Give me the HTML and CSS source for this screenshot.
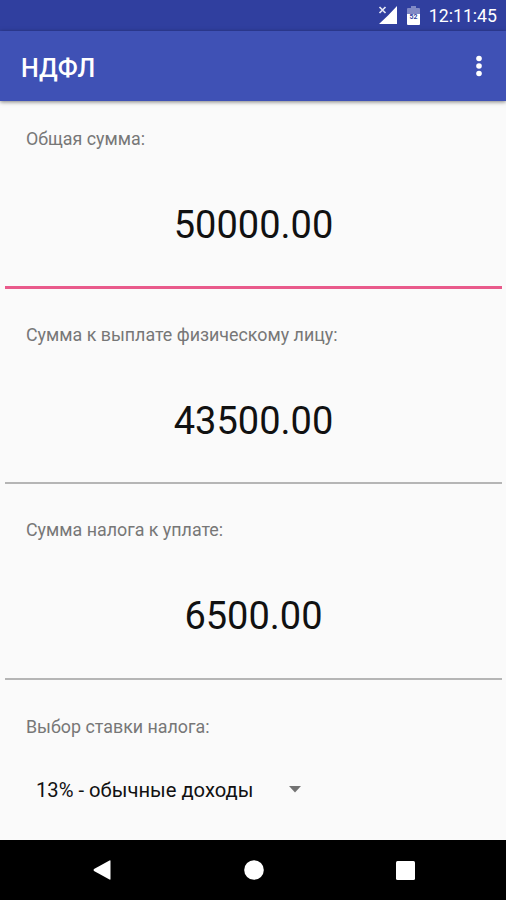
FILE: index.html
```html
<!DOCTYPE html>
<html lang="ru">
<head>
<meta charset="utf-8">
<title>НДФЛ</title>
<link rel="stylesheet" href="styles.css">
</head>
<body>
<div class="status">
  <svg class="signal" width="20" height="19" viewBox="0 0 20 19"><path d="M19 0v18H1L10 9.500z" fill="#fff"/><path d="M1.500 1l6 6M7.500 1l-6 6" stroke="#e4e7f5" stroke-width="1.700"/></svg>
  <svg class="battery" width="13" height="19" viewBox="0 0 13 19"><path d="M4 0h5v2h3q1 0 1 1v5H0V3q0-1 1-1h3z" fill="#8089c5"/><path d="M0 8h13v10q0 1-1 1H1q-1 0-1-1z" fill="#fff"/><text x="6.500" y="13" class="battery-text">52</text></svg>
  <span class="clock">12:11:45</span>
</div>
<header class="toolbar">
  <h1 class="title">НДФЛ</h1>
  <svg class="more" width="8" height="22" viewBox="0 0 8 22"><g fill="#fff"><circle cx="4" cy="3.500" r="2.800"/><circle cx="4" cy="11" r="2.800"/><circle cx="4" cy="18.500" r="2.800"/></g></svg>
</header>
<main class="content">
  <section class="field active"><div class="label"><span>Общая сумма:</span></div><div class="value"><span>50000.00</span></div></section>
  <section class="field"><div class="label"><span>Сумма к выплате физическому лицу:</span></div><div class="value"><span>43500.00</span></div></section>
  <section class="field"><div class="label"><span>Сумма налога к уплате:</span></div><div class="value"><span>6500.00</span></div></section>
  <section class="rate"><div class="label"><span>Выбор ставки налога:</span></div>
    <div class="select"><span>13% - обычные доходы</span><svg width="12" height="7" viewBox="0 0 12 7"><path d="M0 0h12L6 6.500z" fill="#737373"/></svg></div></section>
</main>
<nav class="nav">
  <svg width="18" height="20" viewBox="0 0 18 20"><path d="M16.500.5q1-.5 1 .5v18q0 1-1 .5L1 11q-1-1 0-2z" fill="#fff"/></svg>
  <svg width="20" height="20" viewBox="0 0 20 20"><circle cx="10" cy="10" r="9.800" fill="#fff"/></svg>
  <svg width="19" height="19" viewBox="0 0 19 19"><rect width="19" height="19" rx="1.500" fill="#fff"/></svg>
</nav>
</body>
</html>
```
FILE: styles.css
```css
* { box-sizing: border-box; }
body { margin: 0; width: 506px; height: 900px; display: flex; flex-direction: column; overflow: hidden; background: #fafafa; font-family: Roboto, sans-serif; }
.status { height: 31px; flex: none; background: #303f9f; color: #fff; display: flex; align-items: center; justify-content: flex-end; padding-right: 9px; }
.signal { margin-right: 9px; }
.battery { margin-right: 9px; }
.battery-text { font-size: 7px; font-weight: 700; text-anchor: middle; fill: #303f9f; }
.clock { font-size: 17.700px; line-height: 31px; padding-top: 2px; }
.toolbar { height: 70px; flex: none; background: #3f51b5; color: #fff; display: flex; align-items: center; justify-content: space-between; padding: 0 23px 0 21px; box-shadow: 0 1px 4px rgba(0,0,0,.5); }
.title { margin: 0; font-size: 25px; font-weight: 500; padding-top: 4px; }
.content { flex: 1; }
.field { height: 195.500px; margin: 0 4px 0 5px; border-bottom: 2px solid #b5b5b5; }
.active { height: 187.500px; border-bottom: 3px solid #e95a8b; }
.label { padding: 34px 0 0 21px; height: 58px; font-size: 17.850px; line-height: 24px; color: #777; white-space: nowrap; }
.active .label { padding-top: 26px; height: 50px; }
.value { text-align: center; font-size: 38px; line-height: 48px; margin-top: 50px; color: #111; }
.rate { margin: 0 5px; }
.rate .label { padding-top: 35px; height: 59px; }
.select { display: flex; align-items: center; height: 30px; margin: 36px 0 0 31px; font-size: 20.200px; color: #111; gap: 36px; }
.nav { height: 60px; flex: none; background: #000; display: flex; align-items: center; justify-content: space-between; padding: 0 91px 0 93px; }
```
